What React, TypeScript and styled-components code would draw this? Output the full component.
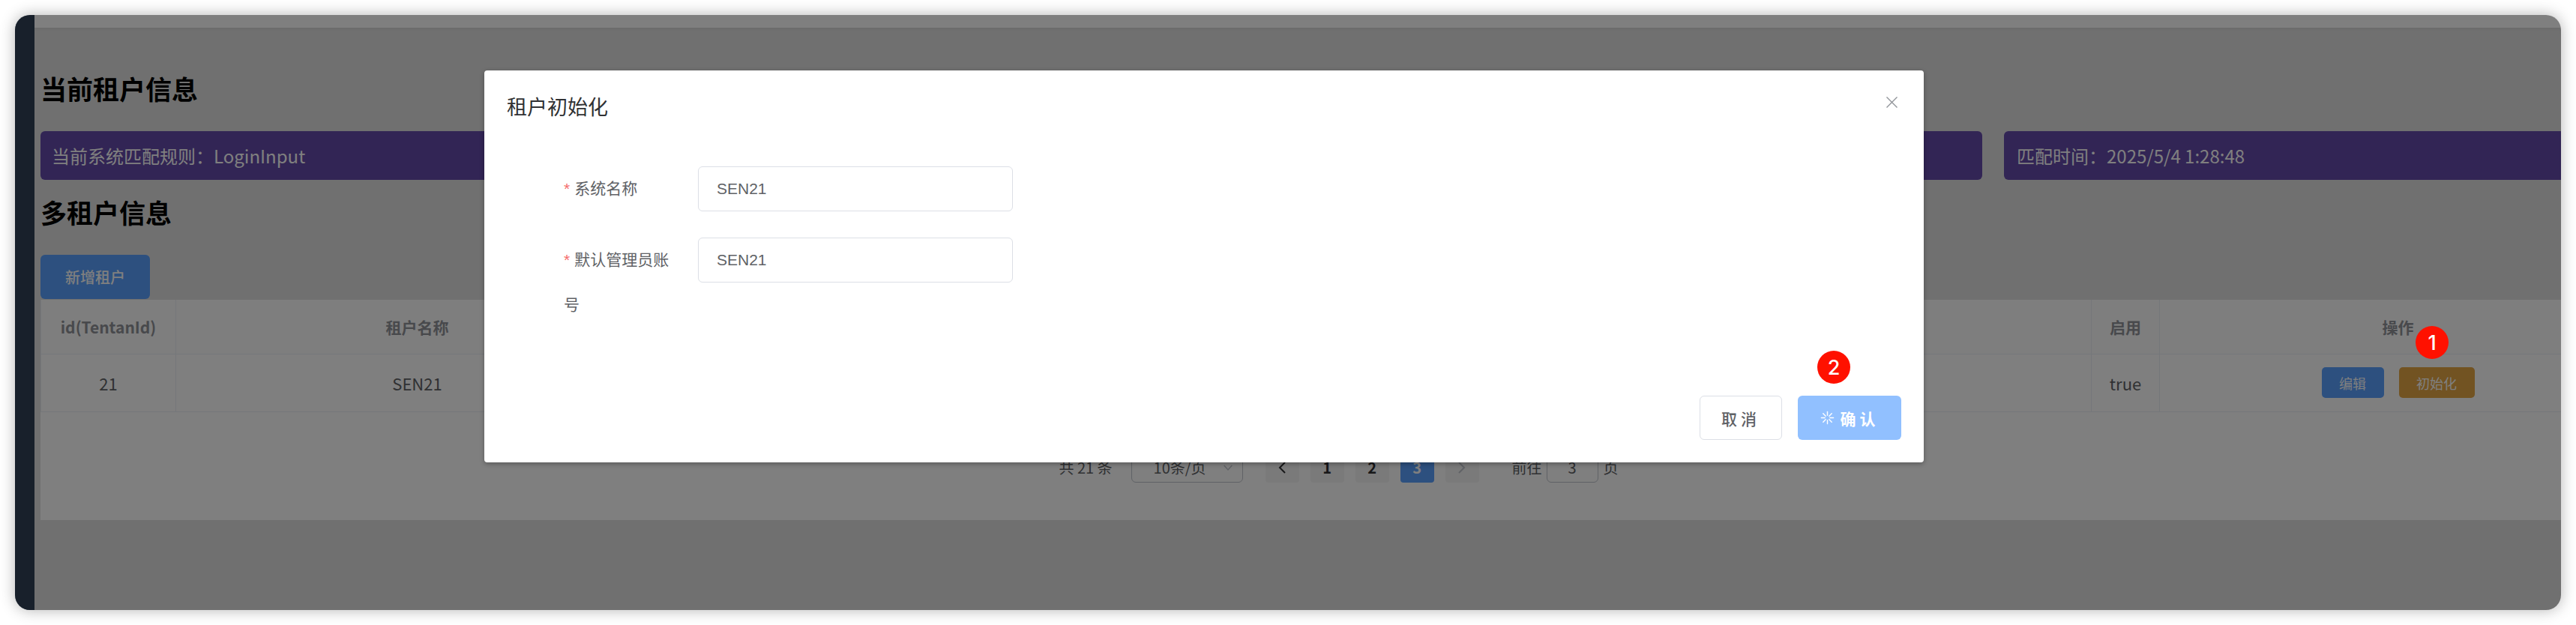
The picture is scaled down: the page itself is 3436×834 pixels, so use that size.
import React from "react";
import styled, { createGlobalStyle } from "styled-components";

const cjk = `"Noto Sans CJK SC", "Noto Sans", sans-serif`;
const modalFont = `"Liberation Sans", "Noto Sans CJK SC", sans-serif`;

const GlobalStyle = createGlobalStyle`
  html, body {
    margin: 0;
    padding: 0;
    background: #fff;
  }
  body {
    font-family: ${cjk};
    overflow: hidden;
  }
  * {
    box-sizing: border-box;
  }
`;

const Page = styled.div`
  width: 3436px;
  height: 834px;
  padding: 20px;
`;

const WindowShadow = styled.div`
  border-radius: 20px;
  box-shadow: 0 0 20px rgba(0, 0, 0, 0.3);
`;

const Window = styled.div`
  position: relative;
  display: flex;
  height: 794px;
  border-radius: 20px;
  overflow: hidden;
  background: #e0e0e0;
`;

const Sidebar = styled.aside`
  flex: 0 0 26px;
  background: #304156;
`;

const Main = styled.div`
  flex: 1;
  min-width: 0;
  display: flex;
  flex-direction: column;
`;

const TopBar = styled.div`
  flex: 0 0 17px;
  background: #fff;
  box-shadow: 0 1px 4px rgba(0, 21, 41, 0.08);
`;

const Content = styled.div`
  padding: 56px 0 0 8px;
`;

const Heading = styled.h2`
  margin: 0;
  height: 50px;
  line-height: 50px;
  font-size: 35px;
  font-weight: 700;
  color: #000;
`;

const RuleRow = styled.div`
  display: flex;
  gap: 29px;
  margin: 32px 0 18px;
`;

const RuleBar = styled.div<{ $width: number; $inset: number }>`
  flex: 0 0 ${(p) => p.$width}px;
  height: 65px;
  padding-left: ${(p) => p.$inset}px;
  border-radius: 6px;
  background: #644aaa;
  color: #fff;
  font-size: 24px;
  line-height: 65px;
`;

const Toolbar = styled.div`
  margin-top: 32px;
  height: 60px;
`;

const PrimaryButton = styled.button`
  width: 146px;
  height: 59px;
  padding: 0;
  border: 0;
  border-radius: 6px;
  background: #5aa0ff;
  color: #fff;
  font-family: ${cjk};
  font-size: 20px;
  font-weight: 500;
`;

/* the table is wider than the window and gets clipped on the right */
const TableCard = styled.div`
  width: 3463px;
  height: 294px;
  background: #fff;
`;

const Table = styled.table`
  width: 100%;
  table-layout: fixed;
  border-collapse: collapse;
`;

const HeadCell = styled.th`
  height: 72px;
  padding: 0;
  border: 1px solid #ebeef5;
  border-top: 0;
  background: #fcfcfc;
  color: #909399;
  font-size: 21px;
  font-weight: 700;
  text-align: center;
`;

const Cell = styled.td`
  height: 77px;
  padding: 0;
  border: 1px solid #ebeef5;
  color: #606266;
  font-size: 22px;
  text-align: center;
`;

const ActionGroup = styled.div`
  display: flex;
  justify-content: center;
  gap: 20px;
`;

const ActionButton = styled.button<{ $color: string; $width: number }>`
  width: ${(p) => p.$width}px;
  height: 41px;
  padding: 0;
  border: 0;
  border-radius: 5px;
  background: ${(p) => p.$color};
  color: #fff;
  font-family: ${cjk};
  font-size: 18px;
`;

const Pager = styled.div`
  display: flex;
  align-items: center;
  justify-content: center;
  height: 40px;
  margin-top: 54px;
  color: #606266;
  font-size: 20px;
`;

const PagerSelect = styled.div`
  display: flex;
  align-items: center;
  justify-content: space-between;
  width: 149px;
  height: 40px;
  margin: 0 30px 0 25px;
  padding: 0 13px 0 29px;
  border: 1px solid #c0c4cc;
  border-radius: 6px;
`;

const PagerButton = styled.div<{ $active?: boolean; $muted?: boolean }>`
  display: flex;
  align-items: center;
  justify-content: center;
  width: 45px;
  height: 40px;
  margin-right: 15px;
  border-radius: 4px;
  background: ${(p) => (p.$active ? "#5aa0ff" : "#f4f4f5")};
  color: ${(p) => (p.$active ? "#fff" : p.$muted ? "#c0c4cc" : "#303133")};
  font-weight: 700;
`;

const JumpInput = styled.div`
  display: flex;
  align-items: center;
  justify-content: center;
  width: 69px;
  height: 40px;
  margin: 0 7px 0 6px;
  border: 1px solid #c0c4cc;
  border-radius: 6px;
`;

const JumpLabel = styled.span`
  margin-left: 29px;
`;

const Overlay = styled.div`
  position: absolute;
  inset: 0;
  background: rgba(0, 0, 0, 0.5);
`;

const Modal = styled.div`
  position: absolute;
  left: 626px;
  top: 74px;
  width: 1920px;
  height: 523px;
  display: flex;
  flex-direction: column;
  border-radius: 4px;
  background: #fff;
  box-shadow: 0 2px 6px rgba(0, 0, 0, 0.3);
  font-family: ${modalFont};
`;

const ModalHeader = styled.div`
  display: flex;
  justify-content: space-between;
  padding: 31px 35px 0 30px;
  height: 128px;
`;

const ModalTitle = styled.span`
  color: #303133;
  font-size: 27px;
  line-height: 38px;
`;

const CloseIcon = styled.svg`
  width: 15px;
  height: 15px;
  margin-top: 4px;
  stroke: #909399;
  stroke-width: 1.4;
`;

const FormBody = styled.div`
  flex: 1;
  display: flex;
  flex-direction: column;
  gap: 35px;
`;

const FormRow = styled.div`
  display: flex;
  padding-left: 106px;
`;

const FormLabel = styled.label`
  flex: 0 0 179px;
  padding-right: 24px;
  color: #606266;
  font-size: 21px;
  line-height: 60px;
`;

const Star = styled.span`
  margin-right: 6px;
  color: #f56c6c;
`;

const FormInput = styled.div`
  width: 420px;
  height: 60px;
  padding-left: 24px;
  border: 1px solid #dcdfe6;
  border-radius: 6px;
  color: #606266;
  font-size: 21px;
  line-height: 58px;
`;

const ModalFooter = styled.div`
  display: flex;
  justify-content: flex-end;
  gap: 21px;
  padding: 0 30px 30px 0;
`;

const CancelButton = styled.button`
  width: 110px;
  height: 59px;
  padding: 0;
  border: 1px solid #dcdfe6;
  border-radius: 6px;
  background: #fff;
  color: #606266;
  font-family: ${modalFont};
  font-size: 21px;
  font-weight: 500;
  letter-spacing: 5px;
`;

const ConfirmButton = styled.button`
  display: flex;
  align-items: center;
  justify-content: center;
  gap: 8px;
  width: 138px;
  height: 59px;
  padding: 0;
  border: 0;
  border-radius: 6px;
  background: #91c0ff;
  color: #fff;
  font-family: ${modalFont};
  font-size: 21px;
  font-weight: 700;
  letter-spacing: 5px;
`;

const Spinner = styled.svg`
  width: 19px;
  height: 19px;
  stroke: #fff;
  stroke-width: 1.5;
  stroke-linecap: round;
`;

const StepBadge = styled.div<{ $left: number; $top: number }>`
  position: absolute;
  left: ${(p) => p.$left}px;
  top: ${(p) => p.$top}px;
  width: 44px;
  height: 44px;
  display: flex;
  align-items: center;
  justify-content: center;
  border-radius: 50%;
  background: #ff1100;
  color: #fff;
  font-family: "Inter", sans-serif;
  font-size: 27px;
  font-weight: 500;
`;

const spinnerSpokes = [0, 45, 90, 135, 180, 225, 270, 315];

function App() {
  return (
    <Page>
      <GlobalStyle />
      <WindowShadow>
        <Window>
          <Sidebar />
          <Main>
            <TopBar />
            <Content>
              <Heading>当前租户信息</Heading>
              <RuleRow>
                <RuleBar $width={2590} $inset={15}>当前系统匹配规则：LoginInput</RuleBar>
                <RuleBar $width={900} $inset={17}>匹配时间：2025/5/4 1:28:48</RuleBar>
              </RuleRow>
              <Heading>多租户信息</Heading>
              <Toolbar>
                <PrimaryButton>新增租户</PrimaryButton>
              </Toolbar>
              <TableCard>
                <Table>
                  <colgroup>
                    <col width={180} />
                    <col width={644} />
                    <col />
                    <col width={91} />
                    <col width={636} />
                  </colgroup>
                  <thead>
                    <tr>
                      <HeadCell>id(TentanId)</HeadCell>
                      <HeadCell>租户名称</HeadCell>
                      <HeadCell />
                      <HeadCell>启用</HeadCell>
                      <HeadCell>操作</HeadCell>
                    </tr>
                  </thead>
                  <tbody>
                    <tr>
                      <Cell>21</Cell>
                      <Cell>SEN21</Cell>
                      <Cell />
                      <Cell>true</Cell>
                      <Cell>
                        <ActionGroup>
                          <ActionButton $color="#5aa0ff" $width={83}>编辑</ActionButton>
                          <ActionButton $color="#e4a644" $width={101}>初始化</ActionButton>
                        </ActionGroup>
                      </Cell>
                    </tr>
                  </tbody>
                </Table>
                <Pager>
                  <span>共 21 条</span>
                  <PagerSelect>
                    <span>10条/页</span>
                    <svg width="12" height="8" viewBox="0 0 12 8" fill="none" stroke="#c0c4cc" strokeWidth="1.3">
                      <path d="M.7 1 6 7l5.3-6" />
                    </svg>
                  </PagerSelect>
                  <PagerButton>
                    <svg width="10" height="16" viewBox="0 0 10 16" fill="none" stroke="#303133" strokeWidth="2">
                      <path d="M9 1 2 8l7 7" />
                    </svg>
                  </PagerButton>
                  <PagerButton>1</PagerButton>
                  <PagerButton>2</PagerButton>
                  <PagerButton $active>3</PagerButton>
                  <PagerButton $muted>
                    <svg width="10" height="16" viewBox="0 0 10 16" fill="none" stroke="#c0c4cc" strokeWidth="2">
                      <path d="m1 1 7 7-7 7" />
                    </svg>
                  </PagerButton>
                  <JumpLabel>前往</JumpLabel>
                  <JumpInput>3</JumpInput>
                  <span>页</span>
                </Pager>
              </TableCard>
            </Content>
          </Main>
          <Overlay />
          <Modal>
            <ModalHeader>
              <ModalTitle>租户初始化</ModalTitle>
              <CloseIcon viewBox="0 0 15 15" fill="none">
                <path d="M.5.5l14 14M14.5.5l-14 14" />
              </CloseIcon>
            </ModalHeader>
            <FormBody>
              <FormRow>
                <FormLabel><Star>*</Star>系统名称</FormLabel>
                <FormInput>SEN21</FormInput>
              </FormRow>
              <FormRow>
                <FormLabel><Star>*</Star>默认管理员账号</FormLabel>
                <FormInput>SEN21</FormInput>
              </FormRow>
            </FormBody>
            <ModalFooter>
              <CancelButton>取消</CancelButton>
              <ConfirmButton>
                <Spinner viewBox="0 0 20 20" fill="none">
                  {spinnerSpokes.map((deg) => (
                    <path key={deg} d="M10 1.5v5" transform={`rotate(${deg} 10 10)`} />
                  ))}
                </Spinner>
                确认
              </ConfirmButton>
            </ModalFooter>
          </Modal>
          <StepBadge $left={3202} $top={415}>1</StepBadge>
          <StepBadge $left={2404} $top={448}>2</StepBadge>
        </Window>
      </WindowShadow>
    </Page>
  );
}

export default App;
